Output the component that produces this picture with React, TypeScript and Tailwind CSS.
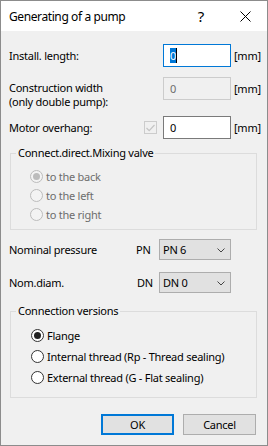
import React from "react";

function Radio({ label, checked, disabled }: { label: string; checked?: boolean; disabled?: boolean }) {
  return (
    <div className="flex items-center h-full">
      <div
        className={
          "w-[13px] h-[13px] rounded-full border flex items-center justify-center shrink-0 " +
          (disabled ? "border-[#bcbcbc] bg-[#f3f3f3]" : "border-[#333333] bg-white")
        }
      >
        {checked && (
          <div className={"w-[7px] h-[7px] rounded-full " + (disabled ? "bg-[#bcbcbc]" : "bg-[#222222]")} />
        )}
      </div>
      <span className={"ml-[3px] " + (disabled ? "text-[#6d6d6d]" : "text-black")}>{label}</span>
    </div>
  );
}

function Select({ value }: { value: string }) {
  return (
    <div className="w-[72px] h-[21px] bg-[#e1e1e1] border border-[#adadad] flex items-center pl-[3px] pr-[5px]">
      <span className="flex-1">{value}</span>
      <svg width="8" height="5" viewBox="0 0 8 5" className="mt-[1px]">
        <path d="M0.5 0.5 L4 4 L7.5 0.5" fill="none" stroke="#444" strokeWidth="1" />
      </svg>
    </div>
  );
}

export default function App() {
  return (
    <div className="w-[268px] h-[446px] border border-[#8c8c8c] bg-[#f0f0f0] flex flex-col text-[11px] leading-[15px] tracking-[-0.25px] text-black font-['Noto_Sans',sans-serif] overflow-hidden">
      {/* Title bar */}
      <div className="h-[30px] bg-white flex items-center shrink-0">
        <span className="flex-1 pl-[8px] text-[12px] tracking-[-0.4px]">Generating of a pump</span>
        <div className="w-[44px] h-full flex items-center justify-center text-[15px]">?</div>
        <div className="w-[44px] h-full flex items-center justify-center">
          <svg width="11" height="11" viewBox="0 0 11 11">
            <path d="M0.5 0.5 L10.5 10.5 M10.5 0.5 L0.5 10.5" stroke="#000" strokeWidth="1" fill="none" />
          </svg>
        </div>
      </div>

      {/* Install. length */}
      <div className="mt-[13px] flex items-center h-[23px]">
        <div className="w-[162px] pl-[8px]">Install. length:</div>
        <div className="w-[68px] h-[23px] border border-[#0078d7] bg-white flex items-center pl-[6px]">
          <span className="bg-[#0078d7] text-white leading-[15px]">0</span>
          <span className="w-[1px] h-[15px] bg-black" />
        </div>
        <span className="ml-[3px]">[mm]</span>
      </div>

      {/* Construction width */}
      <div className="mt-[10px] flex items-start">
        <div className="w-[162px] pl-[8px] pt-[4px] leading-[14px]">
          <div>Construction width</div>
          <div>(only double pump):</div>
        </div>
        <div className="w-[68px] h-[23px] border border-[#cccccc] bg-[#f0f0f0] flex items-center pl-[6px] text-[#6d6d6d]">
          0
        </div>
        <span className="ml-[3px] mt-[4px]">[mm]</span>
      </div>

      {/* Motor overhang */}
      <div className="mt-[7px] flex items-center h-[23px]">
        <div className="w-[143px] pl-[8px]">Motor overhang:</div>
        <div className="w-[13px] h-[13px] border border-[#cccccc] bg-[#f0f0f0] flex items-center justify-center">
          <svg width="9" height="8" viewBox="0 0 9 8">
            <path d="M0.5 4 L3.2 6.7 L8.5 1" fill="none" stroke="#c4c4c4" strokeWidth="1.2" />
          </svg>
        </div>
        <div className="w-[6px]" />
        <div className="w-[68px] h-[23px] border border-[#7a7a7a] bg-white flex items-center pl-[6px]">0</div>
        <span className="ml-[3px]">[mm]</span>
      </div>

      {/* Connect.direct.Mixing valve */}
      <fieldset className="mt-[6px] ml-[9px] w-[247px] border border-[#dcdcdc] pb-[5px]">
        <legend className="ml-[5px] px-[2px] leading-[16px]">Connect.direct.Mixing valve</legend>
        <div className="pt-[6px] pl-[19px] flex flex-col">
          <div className="h-[19px]">
            <Radio label="to the back" checked disabled />
          </div>
          <div className="h-[19px]">
            <Radio label="to the left" disabled />
          </div>
          <div className="h-[19px]">
            <Radio label="to the right" disabled />
          </div>
        </div>
      </fieldset>

      {/* Nominal pressure */}
      <div className="mt-[9px] flex items-center h-[21px]">
        <div className="w-[135px] pl-[8px]">Nominal pressure</div>
        <div className="w-[23px]">PN</div>
        <Select value="PN 6" />
      </div>

      <div className="mt-[12px] flex items-center h-[21px]">
        <div className="w-[136px] pl-[8px]">Nom.diam.</div>
        <div className="w-[22px]">DN</div>
        <Select value="DN 0" />
      </div>

      {/* Connection versions */}
      <fieldset className="mt-[10px] ml-[9px] w-[247px] border border-[#dcdcdc] pb-[9px]">
        <legend className="ml-[5px] px-[2px] leading-[16px]">Connection versions</legend>
        <div className="pt-[6px] pl-[20px] flex flex-col">
          <div className="h-[21px]">
            <Radio label="Flange" checked />
          </div>
          <div className="h-[21px]">
            <Radio label="Internal thread (Rp - Thread sealing)" />
          </div>
          <div className="h-[21px]">
            <Radio label="External thread (G - Flat sealing)" />
          </div>
        </div>
      </fieldset>

      {/* Buttons */}
      <div className="mt-[16px] flex justify-end gap-[9px] pr-[11px]">
        <button className="w-[73px] h-[21px] border-2 border-[#0078d7] bg-[#e1e1e1] flex items-center justify-center">
          OK
        </button>
        <button className="w-[73px] h-[21px] border border-[#adadad] bg-[#e1e1e1] flex items-center justify-center">
          Cancel
        </button>
      </div>
    </div>
  );
}
